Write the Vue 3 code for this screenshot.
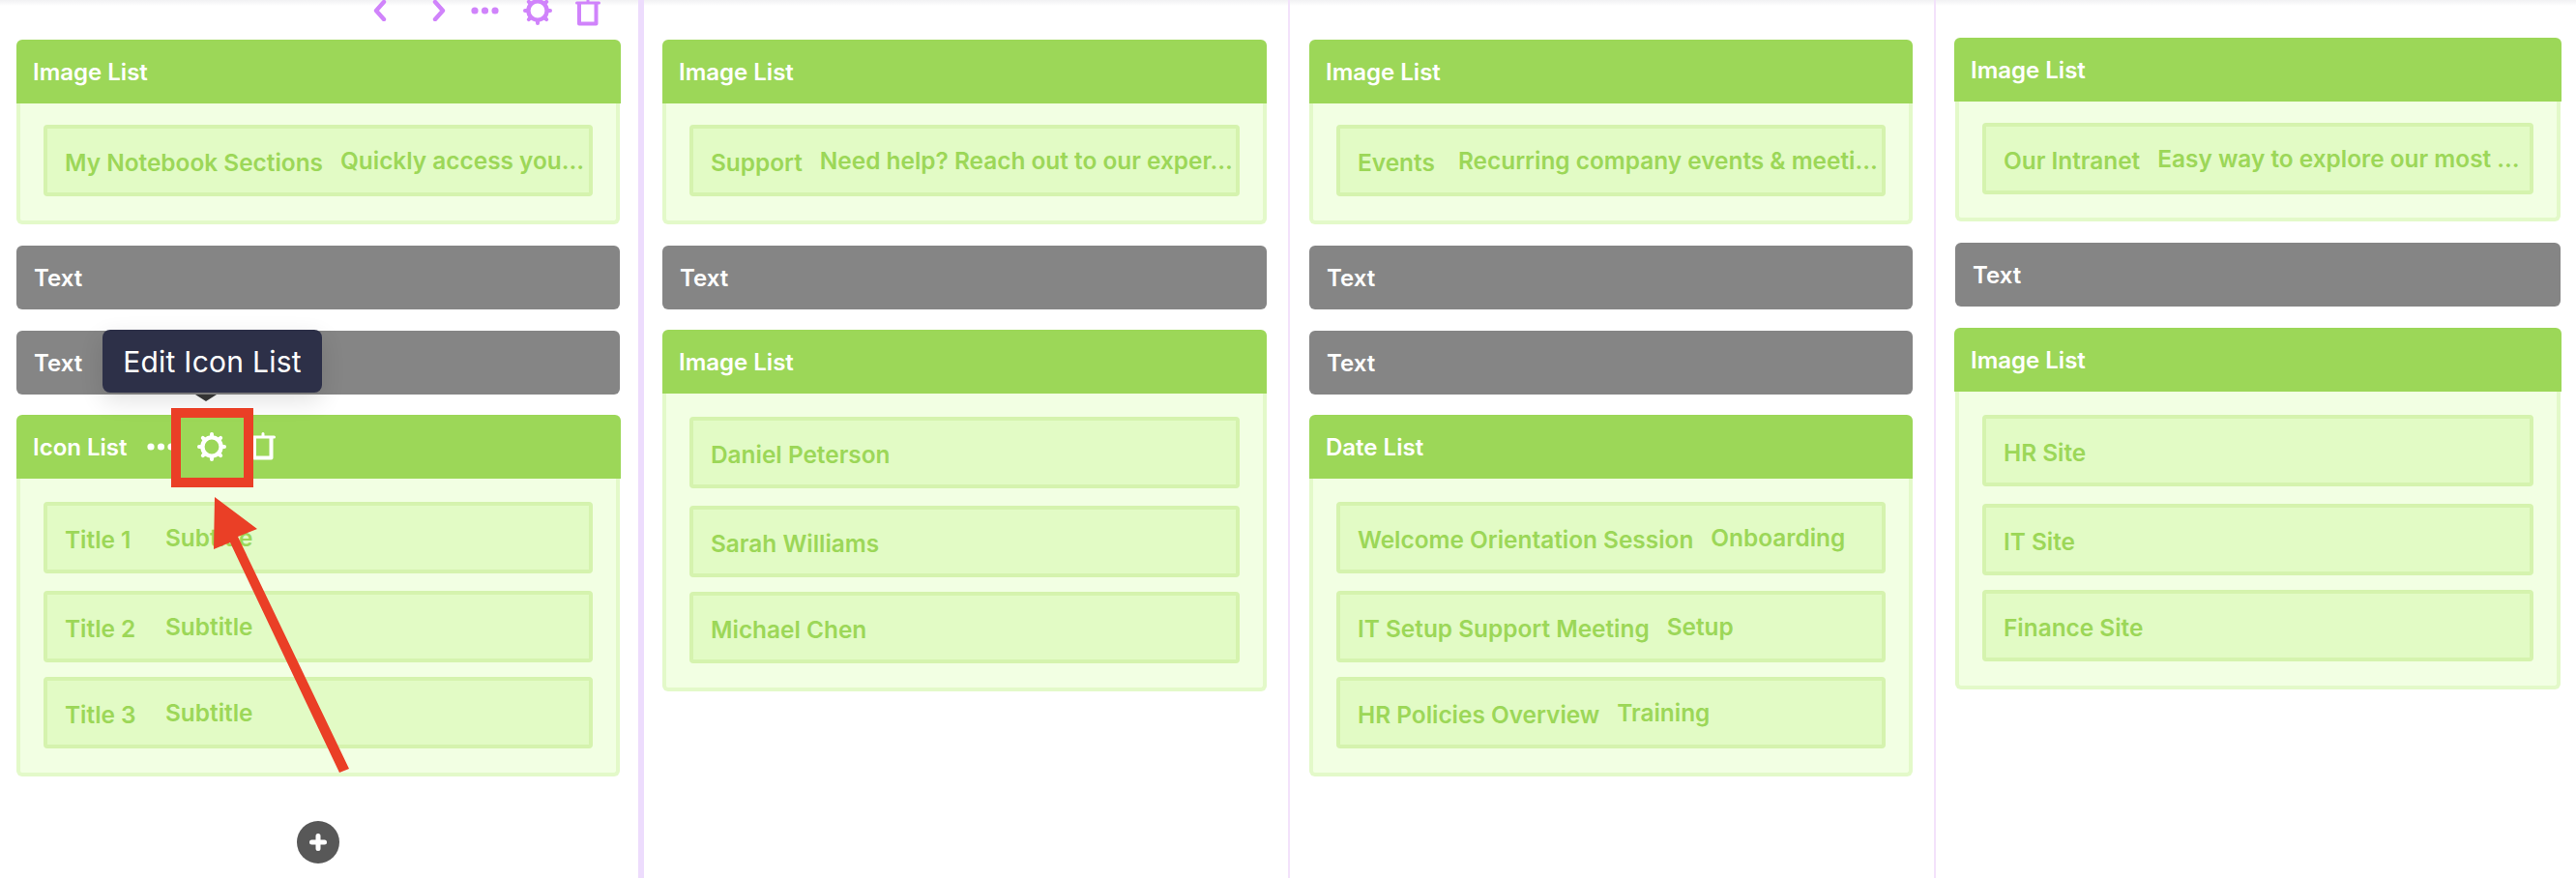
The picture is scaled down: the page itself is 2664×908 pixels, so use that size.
<script setup>
const columns = [
  {
    id: 'one',
    widgets: [
      { type: 'list', label: 'Image List', items: [{ title: 'My Notebook Sections', sub: 'Quickly access you…' }] },
      { type: 'text', label: 'Text' },
      { type: 'text', label: 'Text' },
      {
        type: 'list',
        label: 'Icon List',
        actions: true,
        items: [
          { title: 'Title 1', sub: 'Subtitle' },
          { title: 'Title 2', sub: 'Subtitle' },
          { title: 'Title 3', sub: 'Subtitle' }
        ]
      }
    ]
  },
  {
    id: 'two',
    widgets: [
      { type: 'list', label: 'Image List', items: [{ title: 'Support', sub: 'Need help? Reach out to our exper…' }] },
      { type: 'text', label: 'Text' },
      {
        type: 'list',
        label: 'Image List',
        items: [{ title: 'Daniel Peterson' }, { title: 'Sarah Williams' }, { title: 'Michael Chen' }]
      }
    ]
  },
  {
    id: 'three',
    widgets: [
      { type: 'list', label: 'Image List', items: [{ title: 'Events', sub: 'Recurring company events & meeti…' }] },
      { type: 'text', label: 'Text' },
      { type: 'text', label: 'Text' },
      {
        type: 'list',
        label: 'Date List',
        items: [
          { title: 'Welcome Orientation Session', sub: 'Onboarding' },
          { title: 'IT Setup Support Meeting', sub: 'Setup' },
          { title: 'HR Policies Overview', sub: 'Training' }
        ]
      }
    ]
  },
  {
    id: 'four',
    widgets: [
      { type: 'list', label: 'Image List', items: [{ title: 'Our Intranet', sub: 'Easy way to explore our most …' }] },
      { type: 'text', label: 'Text' },
      {
        type: 'list',
        label: 'Image List',
        items: [{ title: 'HR Site' }, { title: 'IT Site' }, { title: 'Finance Site' }]
      }
    ]
  }
]

const gearTeeth = [0, 45, 90, 135, 180, 225, 270, 315]
</script>

<template>
  <div class="page">
    <svg class="sprite" aria-hidden="true">
      <defs>
        <symbol id="gear" viewBox="0 0 30 30">
          <circle cx="15" cy="15" r="9.6" fill="none" stroke="currentColor" stroke-width="4.4" />
          <line
            v-for="a in gearTeeth"
            :key="a"
            x1="15"
            y1="4"
            x2="15"
            y2="2"
            stroke="currentColor"
            stroke-width="4"
            stroke-linecap="round"
            :transform="`rotate(${a} 15 15)`"
          />
        </symbol>
        <symbol id="trash" viewBox="0 0 26 30">
          <path d="M4 5v21.5h17.5V5" fill="none" stroke="currentColor" stroke-width="4" stroke-linejoin="round" />
          <path d="M1.5 5h23M13 1.5V5" fill="none" stroke="currentColor" stroke-width="3" stroke-linecap="round" />
        </symbol>
        <symbol id="dots" viewBox="0 0 30 8">
          <circle cx="4" cy="4" r="3.6" fill="currentColor" />
          <circle cx="14.5" cy="4" r="3.6" fill="currentColor" />
          <circle cx="25" cy="4" r="3.6" fill="currentColor" />
        </symbol>
      </defs>
    </svg>

    <section v-for="col in columns" :key="col.id" class="column" :class="col.id">
      <div v-if="col.id === 'one'" class="toolbar">
        <svg class="chevron" viewBox="0 0 14 22"><path d="M11 2 3 11l8 9" /></svg>
        <svg class="chevron next" viewBox="0 0 14 22"><path d="m3 2 8 9-8 9" /></svg>
        <svg class="dots"><use href="#dots" /></svg>
        <svg class="gear"><use href="#gear" /></svg>
        <svg class="trash"><use href="#trash" /></svg>
      </div>

      <div v-for="(w, i) in col.widgets" :key="i" class="widget" :class="w.type">
        <div class="widget-head">
          <span class="label">{{ w.label }}</span>
          <div v-if="w.actions" class="head-actions">
            <svg class="dots"><use href="#dots" /></svg>
            <svg class="gear"><use href="#gear" /></svg>
            <svg class="trash"><use href="#trash" /></svg>
          </div>
        </div>
        <div v-if="w.items" class="widget-body" :class="{ multi: w.items.length > 1 }">
          <div v-for="item in w.items" :key="item.title" class="item">
            <span class="item-title">{{ item.title }}</span>
            <span v-if="item.sub" class="item-sub">{{ item.sub }}</span>
          </div>
        </div>
      </div>

      <button v-if="col.id === 'one'" class="add" aria-label="Add">
        <svg viewBox="0 0 20 20"><path d="M10 3.5v13M3.5 10h13" /></svg>
      </button>
    </section>

    <div class="tooltip">Edit Icon List</div>
    <div class="highlight"></div>
    <svg class="pointer" viewBox="0 0 2664 908">
      <polygon points="222,514 266,547 246,555 361,795 351,799 238,561 221,568" />
    </svg>
  </div>
</template>

<style scoped>
.page {
  position: relative;
  display: grid;
  grid-template-columns: 666px 668px 668px 662px;
  height: 908px;
  overflow: hidden;
  background: #fff;
  font-family: Inter, 'Liberation Sans', sans-serif;
}

.page::before {
  content: '';
  position: absolute;
  inset: 0 0 auto 0;
  height: 6px;
  background: linear-gradient(#f1f1f3, #fff);
}

.sprite {
  position: absolute;
  width: 0;
  height: 0;
}

.column {
  position: relative;
  display: flex;
  flex-direction: column;
  gap: 22px;
  box-sizing: border-box;
  padding-top: 41px;
  border-right: 2px solid #f3e2fb;
}

.column.one {
  padding: 41px 19px 0 17px;
  border-right: 6px solid #eddcfd;
}

.column.two {
  padding: 41px 22px 0 19px;
}

.column.three {
  padding: 41px 22px 0 20px;
}

.column.four {
  padding: 39px 16px 0 20px;
  border-right: none;
}

.column:not(.four) .widget:last-of-type {
  margin-top: -1px;
}

.one .list .widget-head {
  margin-right: -1px;
}

.four .list .widget-head {
  margin: 0 -1px;
}

.four .widget-body:not(.multi) {
  padding-bottom: 24px;
}

.toolbar {
  position: absolute;
  top: 0;
  left: 0;
  width: 100%;
  height: 30px;
  color: #d083fb;
}

.toolbar svg {
  position: absolute;
}

.toolbar .chevron {
  left: 386px;
  top: 0;
}

.toolbar .chevron.next {
  left: 447px;
}

.toolbar .dots {
  left: 487px;
  top: 7px;
}

.toolbar .gear {
  left: 541px;
  top: -4px;
}

.toolbar .trash {
  left: 595px;
  top: -2px;
}

.chevron {
  width: 14px;
  height: 22px;
  fill: none;
  stroke: currentColor;
  stroke-width: 4.4;
  stroke-linecap: round;
  stroke-linejoin: round;
}

.dots {
  flex: none;
  width: 30px;
  height: 8px;
}

.gear {
  flex: none;
  width: 30px;
  height: 30px;
}

.trash {
  flex: none;
  width: 26px;
  height: 30px;
}

.widget-head {
  display: flex;
  align-items: center;
  height: 66px;
  padding: 0 17px;
  color: #fff;
  background: #9cd758;
  border-radius: 6px 6px 0 0;
  font-size: 24px;
  font-weight: 600;
}

.widget.text .widget-head {
  padding: 0 18px;
  background: #858585;
  border-radius: 6px;
}

.head-actions {
  display: flex;
  align-items: center;
  margin-left: 21px;
}

.head-actions .gear {
  margin-left: 22px;
}

.head-actions .trash {
  margin-left: 25px;
}

.widget-body {
  display: flex;
  flex-direction: column;
  gap: 15px;
  padding: 22px 24px 25px;
  color: #9cd758;
  background: #f2ffe3;
  border: 4px solid #e3f9c9;
  border-top: none;
  border-radius: 0 0 6px 6px;
}

.widget-body.multi {
  padding-top: 24px;
}

.item {
  display: flex;
  align-items: center;
  gap: 18px;
  box-sizing: border-box;
  height: 74px;
  padding: 0 6px 0 18px;
  background: #e2fbc5;
  border: 4px solid #d5f3ae;
  border-radius: 4px;
  font-size: 24.4px;
  font-weight: 600;
}

/* the first gap in each list is a little wider than the second */
.item:nth-child(2) {
  margin-top: 3px;
}

.item-title {
  flex: none;
  min-width: 86px;
  padding-top: 3px;
  white-space: nowrap;
}

.item-sub {
  flex: 1;
  min-width: 0;
  white-space: nowrap;
}

.add {
  align-self: center;
  display: flex;
  align-items: center;
  justify-content: center;
  width: 44px;
  height: 44px;
  margin-top: 24px;
  padding: 0;
  background: #585858;
  border: none;
  border-radius: 50%;
}

.add svg {
  width: 20px;
  height: 20px;
  fill: none;
  stroke: #fff;
  stroke-width: 5;
  stroke-linecap: round;
}

.tooltip {
  position: absolute;
  left: 106px;
  top: 341px;
  width: 227px;
  height: 65px;
  display: flex;
  align-items: center;
  justify-content: center;
  color: #fff;
  background: #2d3048;
  border-radius: 8px;
  box-shadow: 0 8px 24px rgba(0, 0, 0, 0.12);
  font-size: 30px;
  letter-spacing: 0.25px;
}

.tooltip::after {
  content: '';
  position: absolute;
  left: 96px;
  top: 67px;
  border: 11px solid transparent;
  border-top: 7px solid #333;
  border-bottom: none;
}

.highlight {
  position: absolute;
  left: 177px;
  top: 422px;
  width: 85px;
  height: 82px;
  box-sizing: border-box;
  border: 10px solid #ea3f26;
}

.pointer {
  position: absolute;
  inset: 0;
  width: 100%;
  height: 100%;
  fill: #ea3f26;
}
</style>

<style>
body {
  margin: 0;
  overflow: hidden;
}
</style>
